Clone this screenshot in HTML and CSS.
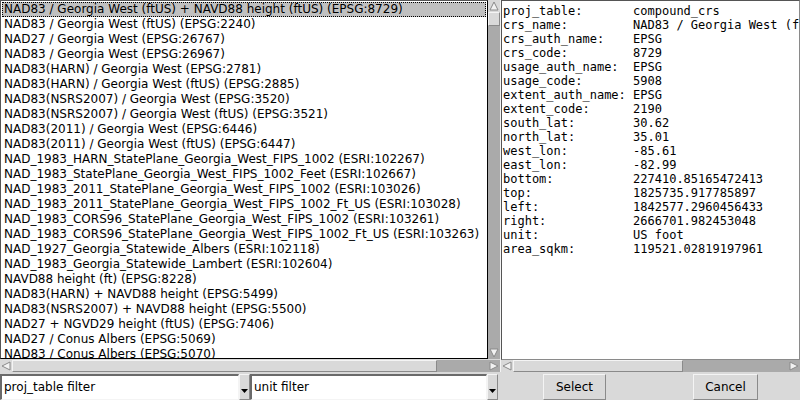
FILE: index.html
```html
<!DOCTYPE html>
<html>
<head>
<meta charset="utf-8">
<link rel="stylesheet" href="styles.css">
</head>
<body>
<div class="app">
  <div class="top">
    <div class="browser">
      <div class="list">
        <div class="row sel">NAD83 / Georgia West (ftUS) + NAVD88 height (ftUS) (EPSG:8729)</div>
        <div class="row">NAD83 / Georgia West (ftUS) (EPSG:2240)</div>
        <div class="row">NAD27 / Georgia West (EPSG:26767)</div>
        <div class="row">NAD83 / Georgia West (EPSG:26967)</div>
        <div class="row">NAD83(HARN) / Georgia West (EPSG:2781)</div>
        <div class="row">NAD83(HARN) / Georgia West (ftUS) (EPSG:2885)</div>
        <div class="row">NAD83(NSRS2007) / Georgia West (EPSG:3520)</div>
        <div class="row">NAD83(NSRS2007) / Georgia West (ftUS) (EPSG:3521)</div>
        <div class="row">NAD83(2011) / Georgia West (EPSG:6446)</div>
        <div class="row">NAD83(2011) / Georgia West (ftUS) (EPSG:6447)</div>
        <div class="row">NAD_1983_HARN_StatePlane_Georgia_West_FIPS_1002 (ESRI:102267)</div>
        <div class="row">NAD_1983_StatePlane_Georgia_West_FIPS_1002_Feet (ESRI:102667)</div>
        <div class="row">NAD_1983_2011_StatePlane_Georgia_West_FIPS_1002 (ESRI:103026)</div>
        <div class="row">NAD_1983_2011_StatePlane_Georgia_West_FIPS_1002_Ft_US (ESRI:103028)</div>
        <div class="row">NAD_1983_CORS96_StatePlane_Georgia_West_FIPS_1002 (ESRI:103261)</div>
        <div class="row">NAD_1983_CORS96_StatePlane_Georgia_West_FIPS_1002_Ft_US (ESRI:103263)</div>
        <div class="row">NAD_1927_Georgia_Statewide_Albers (ESRI:102118)</div>
        <div class="row">NAD_1983_Georgia_Statewide_Lambert (ESRI:102604)</div>
        <div class="row">NAVD88 height (ft) (EPSG:8228)</div>
        <div class="row">NAD83(HARN) + NAVD88 height (EPSG:5499)</div>
        <div class="row">NAD83(NSRS2007) + NAVD88 height (EPSG:5500)</div>
        <div class="row">NAD27 + NGVD29 height (ftUS) (EPSG:7406)</div>
        <div class="row">NAD27 / Conus Albers (EPSG:5069)</div>
        <div class="row">NAD83 / Conus Albers (EPSG:5070)</div>
      </div>
      <div class="vscroll">
        <div class="arrow light"><svg width="10" height="10" viewBox="0 0 10 10"><polygon points="5,1 9,9 1,9" class="tri"/></svg></div>
        <div class="vthumb"></div>
        <div class="trough"></div>
        <div class="arrow"><svg width="10" height="10" viewBox="0 0 10 10"><polygon points="1,1 9,1 5,9" class="tri"/></svg></div>
      </div>
      <div class="hscroll left-h">
        <div class="arrow light"><svg width="10" height="10" viewBox="0 0 10 10"><polygon points="1,5 9,1 9,9" class="tri"/></svg></div>
        <div class="hthumb wide"></div>
        <div class="trough"></div>
        <div class="arrow"><svg width="10" height="10" viewBox="0 0 10 10"><polygon points="1,1 9,5 1,9" class="tri"/></svg></div>
      </div>
    </div>
    <div class="detail">
      <pre class="info">proj_table:       compound_crs
crs_name:         NAD83 / Georgia West (ftUS) + NAVD88 height (ftUS)
crs_auth_name:    EPSG
crs_code:         8729
usage_auth_name:  EPSG
usage_code:       5908
extent_auth_name: EPSG
extent_code:      2190
south_lat:        30.62
north_lat:        35.01
west_lon:         -85.61
east_lon:         -82.99
bottom:           227410.85165472413
top:              1825735.917785897
left:             1842577.2960456433
right:            2666701.982453048
unit:             US foot
area_sqkm:        119521.02819197961</pre>
      <div class="hscroll">
        <div class="arrow light"><svg width="10" height="10" viewBox="0 0 10 10"><polygon points="1,5 9,1 9,9" class="tri"/></svg></div>
        <div class="hthumb narrow"></div>
        <div class="trough"></div>
        <div class="arrow"><svg width="10" height="10" viewBox="0 0 10 10"><polygon points="1,1 9,5 1,9" class="tri"/></svg></div>
      </div>
    </div>
  </div>
  <div class="bottom">
    <div class="input first">proj_table filter</div>
    <div class="dd"><svg width="7" height="4" viewBox="0 0 7 4"><polygon points="0,0 7,0 3.5,4" fill="#000"/></svg></div>
    <div class="input second">unit filter</div>
    <div class="dd"><svg width="7" height="4" viewBox="0 0 7 4"><polygon points="0,0 7,0 3.5,4" fill="#000"/></svg></div>
    <div class="btn select">Select</div>
    <div class="btn cancel">Cancel</div>
  </div>
</div>
</body>
</html>
```

FILE: styles.css
```css
* { box-sizing: border-box; }
html, body {
  margin: 0;
  padding: 0;
  width: 800px;
  height: 400px;
  overflow: hidden;
  background: #d9d9d9;
  font-family: "DejaVu Sans", sans-serif;
  font-size: 12px;
  color: #000;
}
.app {
  width: 800px;
  height: 400px;
  display: flex;
  flex-direction: column;
}
.top {
  display: flex;
  height: 372px;
}
.browser {
  width: 500px;
  display: grid;
  grid-template-columns: 488px 12px;
  grid-template-rows: 360px 12px;
}
.list {
  background: #fff;
  border: 1px solid #000;
  border-top-color: #555;
  border-left-color: #555;
  height: 359px;
  padding: 1px 1px 0 1px;
  overflow: hidden;
}
.row {
  height: 15px;
  line-height: 15px;
  padding-left: 2px;
  white-space: nowrap;
  overflow: hidden;
}
.row.sel {
  background: #c0c0c0;
  outline: 1px dotted #000;
  outline-offset: -1px;
}
.vscroll {
  display: flex;
  flex-direction: column;
  background: #aaaaaa;
  height: 359px;
}
.arrow {
  width: 12px;
  height: 12px;
  flex: none;
  display: flex;
  align-items: center;
  justify-content: center;
  background: #aaaaaa;
}
.arrow.light {
  background: #d9d9d9;
}
.tri {
  fill: #f2f2f2;
  stroke: #8a8a8a;
  stroke-width: 1;
}
.vthumb {
  height: 14px;
  flex: none;
  background: #d9d9d9;
  border-top: 1px solid #f4f4f4;
  border-left: 1px solid #f4f4f4;
  border-bottom: 1px solid #8a8a8a;
  border-right: 1px solid #8a8a8a;
}
.trough {
  flex: 1;
  background: #aaaaaa;
}
.hscroll {
  display: flex;
  height: 12px;
  background: #aaaaaa;
}
.left-h {
  grid-column: 1 / span 2;
}
.hthumb {
  flex: none;
  height: 12px;
  background: #d9d9d9;
  border-top: 1px solid #f4f4f4;
  border-left: 1px solid #f4f4f4;
  border-bottom: 1px solid #8a8a8a;
  border-right: 1px solid #8a8a8a;
}
.hthumb.wide { width: 425px; }
.hthumb.narrow { width: 170px; }
.detail {
  width: 300px;
  display: flex;
  flex-direction: column;
  border-left: 1px solid #f4f4f4;
}
.info {
  margin: 0;
  height: 360px;
  background: #fff;
  border: 1px solid #8a8a8a;
  border-top-color: #555;
  border-left-color: #555;
  padding: 3px 0 0 1px;
  font-family: "DejaVu Sans Mono", monospace;
  font-size: 12px;
  line-height: 14px;
  overflow: hidden;
  white-space: pre;
}
.bottom {
  display: flex;
  height: 28px;
  padding-top: 2px;
  align-items: flex-start;
}
.input {
  height: 26px;
  background: #fff;
  border-top: 2px solid #6a6a6a;
  border-left: 2px solid #6a6a6a;
  border-bottom: 1px solid #f4f4f4;
  border-right: 1px solid #f4f4f4;
  padding-left: 2px;
  line-height: 23px;
  white-space: nowrap;
}
.input.first { width: 239px; }
.input.second { width: 237px; }
.dd {
  width: 11px;
  height: 26px;
  background: #d9d9d9;
  border-top: 1px solid #f4f4f4;
  border-left: 1px solid #f4f4f4;
  border-bottom: 1px solid #8a8a8a;
  border-right: 1px solid #8a8a8a;
  display: flex;
  align-items: flex-end;
  justify-content: center;
  padding-bottom: 6px;
}
.btn {
  height: 26px;
  background: #d9d9d9;
  border-top: 1px solid #f4f4f4;
  border-left: 1px solid #f4f4f4;
  border-bottom: 1px solid #8a8a8a;
  border-right: 1px solid #8a8a8a;
  text-align: center;
  line-height: 24px;
}
.btn.select { width: 63px; margin-left: 45px; }
.btn.cancel { width: 65px; margin-left: 87px; }
```
